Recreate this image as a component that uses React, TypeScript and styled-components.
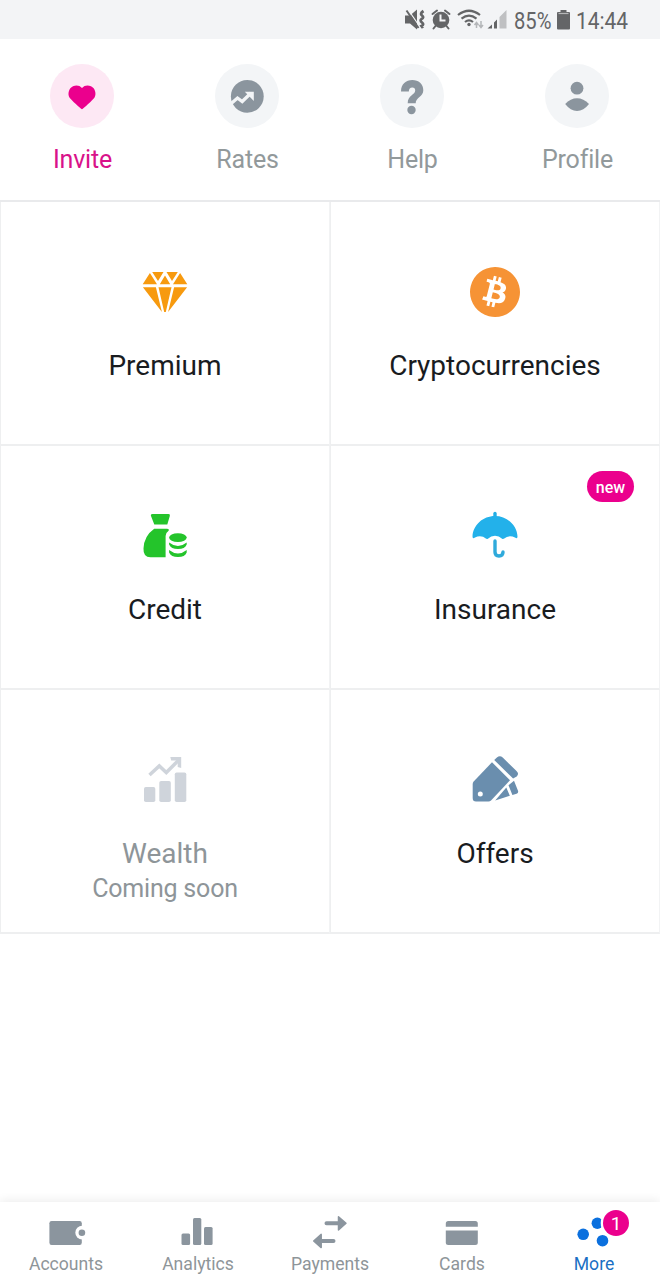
import React from 'react';
import styled, { createGlobalStyle } from 'styled-components';
import { SiBitcoin } from 'react-icons/si';

const GlobalStyle = createGlobalStyle`
  * { box-sizing: border-box; }
  body { margin: 0; background: #fff; font-family: Roboto, 'Liberation Sans', sans-serif; }
`;

const grey = '#8b959e';
const pink = '#eb008d';
const blue = '#0b70de';

const Screen = styled.main`
  display: flex;
  flex-direction: column;
  width: 660px;
  height: 1280px;
  overflow: hidden;
  background: #fff;
`;

const StatusBar = styled.div`
  display: flex;
  justify-content: flex-end;
  height: 39px;
  padding-right: 31px;
  background: #f3f4f6;
  color: #646567;
  svg { display: block; }
`;

const StatusText = styled.span<{ $width: number; $gap?: number }>`
  width: ${p => p.$width}px;
  margin-left: ${p => p.$gap ?? 0}px;
  font-size: 24px;
  line-height: 42px;
  white-space: nowrap;
`;

const Squeezed = styled.span<{ $scale: number }>`
  display: inline-block;
  transform: scaleX(${p => p.$scale});
  transform-origin: left center;
`;

const QuickActions = styled.nav`
  display: grid;
  grid-template-columns: repeat(4, 1fr);
  height: 161px;
  padding-top: 25px;
`;

const QuickAction = styled.div<{ $active?: boolean }>`
  display: flex;
  flex-direction: column;
  align-items: center;
  color: ${p => (p.$active ? '#d9128a' : '#92999b')};
  font-size: 25px;
  letter-spacing: -0.2px;
  line-height: 30px;
  gap: 17px;
`;

const QuickIcon = styled.div<{ $active?: boolean }>`
  width: 64px;
  height: 64px;
  margin-right: 1px;
  border-radius: 50%;
  background: ${p => (p.$active ? '#fde8f4' : '#f3f5f7')};
  svg { display: block; }
`;

const Grid = styled.section`
  display: grid;
  grid-template-columns: 330px 330px;
  grid-template-rows: 244px 244px 244px;
  border-top: 2px solid #e9eaec;
`;

const Tile = styled.div<{ $muted?: boolean }>`
  position: relative;
  display: flex;
  flex-direction: column;
  align-items: center;
  padding-top: 60px;
  border-left: 1px solid #eeeff0;
  border-right: 1px solid #f2f3f4;
  border-bottom: 2px solid #eeeff0;
  color: ${p => (p.$muted ? '#8e9599' : '#191c1f')};
  svg { display: block; }
`;

const TileIcon = styled.div`
  display: flex;
  align-items: center;
  justify-content: center;
  width: 60px;
  height: 60px;
`;

const TileTitle = styled.div`
  margin-top: 26px;
  font-size: 28px;
  line-height: 36px;
`;

const TileSubtitle = styled.div`
  font-size: 25px;
  letter-spacing: -0.2px;
  line-height: 34px;
`;

const NewBadge = styled.span`
  position: absolute;
  top: 25px;
  right: 25px;
  width: 47px;
  height: 31px;
  border-radius: 16px;
  background: ${pink};
  color: #fff;
  font-size: 16px;
  font-weight: 500;
  line-height: 33px;
  text-align: center;
`;

const TabBar = styled.nav`
  display: grid;
  grid-template-columns: repeat(5, 132px);
  height: 78px;
  margin-top: auto;
  background: #fff;
  box-shadow: 0 -2px 9px rgba(0, 0, 0, 0.07);
`;

const Tab = styled.div<{ $active?: boolean }>`
  display: flex;
  flex-direction: column;
  align-items: center;
  padding-top: 6px;
  color: ${p => (p.$active ? '#1a6fc4' : '#8e9599')};
  font-size: 17.6px;
  line-height: 22px;
  svg { display: block; }
`;

const TabIcon = styled.div`
  position: relative;
  width: 60px;
  height: 45px;
`;

const CountBadge = styled.span`
  position: absolute;
  top: 2px;
  left: 39px;
  width: 26px;
  height: 26px;
  border-radius: 50%;
  background: ${pink};
  color: #fff;
  font-size: 19px;
  line-height: 27px;
  text-align: center;
`;

const StatusIcons = () => (
  <svg width="108" height="39" viewBox="0 0 108 39" fill="#646567">
    <path d="M1 15.500h5l7-6v20l-7-6H1z" />
    <path d="M4 9.500l12 17.500" stroke="#f3f4f6" strokeWidth="1.300" />
    <path d="M2.500 10.500l12 17.500" stroke="#646567" strokeWidth="2" fill="none" />
    <path d="M19.500 11q-4 2.500-1.500 4.500q2.500 2-.5 3.500q-2 1.500.5 3.500q2.500 2-.5 3.500l1.500 2" fill="none" stroke="#646567" strokeWidth="2.800" />
    <circle cx="37" cy="20" r="8.300" />
    <path d="M36.500 14.500v6h5" fill="none" stroke="#f3f4f6" strokeWidth="2" />
    <path d="M28.500 14l4.500-3.500M45.500 14l-4.500-3.500M31.500 26l-2 2.500M42.500 26l2 2.500" fill="none" stroke="#646567" strokeWidth="2" strokeLinecap="round" />
    <g fill="none" stroke="#646567" strokeWidth="2.200">
      <path d="M54 15q11-8.500 22 0M57.500 18.700q7.500-6 15 0M61 22q4-3.300 8 0" />
    </g>
    <circle cx="65" cy="24.500" r="1.700" />
    <path d="M72.500 28v-5m-2 2l2-2.500 2 2.500M77 21v6m-2-2l2 2.500 2-2.500" fill="none" stroke="#b4b6b9" strokeWidth="1.500" />
    <path d="M83.500 28.500l4.500-4v4zM90 28.500v-6l3-3v9z" />
    <path d="M95.500 28.500V17l7-7v18.500z" fill="#bfc0c2" />
  </svg>
);

const BatteryIcon = () => (
  <svg width="13" height="39" viewBox="0 0 13 39" fill="#646567">
    <path d="M3.500 10h6v2.500h-6z" />
    <path d="M1 12h11a1 1 0 0 1 1 1v15.500a1 1 0 0 1-1 1H1a1 1 0 0 1-1-1V13a1 1 0 0 1 1-1z" />
    <path d="M1.500 13.500h10" stroke="#b5b6b8" strokeWidth="1.200" />
  </svg>
);

const HeartIcon = () => (
  <svg width="64" height="64" viewBox="0 0 64 64">
    <path d="M32 45.300C30.800 44.800 21 35.800 19.600 33.800C17.300 30.300 18.700 24.200 23 22.300C26.500 20.900 29.600 21.500 32 24C34.400 21.500 37.500 20.900 41 22.300C45.300 24.200 46.700 30.300 44.400 33.800C43 35.800 33.200 44.800 32 45.300Z" fill={pink} />
  </svg>
);

const RatesIcon = () => (
  <svg width="64" height="64" viewBox="0 0 64 64">
    <circle cx="32.300" cy="32.300" r="16.400" fill={grey} />
    <path d="M15 40.500l7.500-6.500 4.700 3.500 8.800-8.500" fill="none" stroke="#f3f5f7" strokeWidth="3.300" />
    <path d="M29.800 27.700h9v9.300z" fill="#f3f5f7" />
  </svg>
);

const HelpIcon = () => (
  <svg width="64" height="64" viewBox="0 0 64 64" fill={grey}>
    <path d="M21 27.500C21 20 26 16 32.300 16S43.300 20 43.300 26.300C43.300 32.700 35.700 33.500 35.700 39.300H27.700C27.700 31 35.200 30.800 35.200 26.500Q35.200 23.500 32.300 23.500Q29 23.500 28.800 27.500Z" />
    <circle cx="31.500" cy="46" r="4.200" />
  </svg>
);

const ProfileIcon = () => (
  <svg width="64" height="64" viewBox="0 0 64 64" fill={grey}>
    <circle cx="32" cy="24.200" r="6.400" />
    <path d="M20.200 40C27 32.400 37 32.400 44 40C37 49.300 27 49.300 20.200 40Z" />
  </svg>
);

const DiamondIcon = () => (
  <svg width="60" height="60" viewBox="0 0 60 60" fill="#f79a0f">
    <path d="M7.700 22.300L14.900 10.900 22 22.300zM17.200 10h11.300l-5.500 9zM24.800 22.300L30 13.600l5.200 8.700zM31.500 10h11.300L37 19zM38 22.300l7.100-11.400 7.200 11.400z" />
    <path d="M7.900 25.200h13l6 24.800zM23.500 25.200h13L30.800 50h-1.600zM39.100 25.200h13L33.100 50z" />
  </svg>
);

const CreditIcon = () => (
  <svg width="60" height="60" viewBox="0 0 60 60" fill="#24c42b">
    <path d="M17.500 8h16q2 0 1.300 2L32.300 18.600H19.300L16 10q-.7-2 1.500-2z" />
    <path d="M19.200 22.800H32q2.500 0 1.600 2Q31 26.500 30.600 30V51.200H15.500Q8 51.200 8.500 42.500Q9 30 19.200 22.800z" />
    <ellipse cx="42.900" cy="31.600" rx="8.800" ry="4.400" />
    <path d="M34.100 36.500Q43 43.500 51.700 36.500V38.500Q50 43 43 43T34.100 38.500zM34.100 44Q43 51 51.700 44V46.500Q50 51 43 51T34.100 46.500z" />
  </svg>
);

const UmbrellaIcon = () => (
  <svg width="60" height="60" viewBox="0 0 60 60" fill="none">
    <path d="M30 7.500v5" stroke="#23aee5" strokeWidth="3.400" strokeLinecap="round" />
    <path d="M7.500 30.500C8 19 18 10 30 10S52 19 52.500 30.500Q52.500 33.300 50 31.500Q44 28.500 38.800 32.700L37.500 33Q30 26.500 22.500 33L21.200 32.700Q16 28.500 10 31.500Q7.500 33.300 7.500 30.500Z" fill="#23b1ea" />
    <path d="M30 35v11q0 4 4 4t4-4" stroke="#2faadb" strokeWidth="3.400" strokeLinecap="round" />
  </svg>
);

const WealthIcon = () => (
  <svg width="60" height="60" viewBox="0 0 60 60" fill="#cfd4db">
    <rect x="9" y="37" width="11.300" height="15" rx="1.800" />
    <rect x="24.300" y="31" width="11.500" height="21" rx="1.800" />
    <rect x="39.800" y="22.500" width="11.500" height="29.500" rx="1.800" />
    <path d="M14.500 25l9.800-9 7 6.500 12.500-12.500" fill="none" stroke="#cfd4db" strokeWidth="3.500" />
    <path d="M35.300 7h10.900v11l-3.500-1v-6.500h-6.500z" />
  </svg>
);

const OffersIcon = () => (
  <svg width="60" height="60" viewBox="0 0 60 60" fill="#6a8eae">
    <path d="M27 12.200L45 30.300 26 50.500Q25 51.500 23.500 51.500H11Q7.700 51.500 7.700 48V34q0-1.500 1.200-2.800z" />
    <path d="M29.200 10l2.700-2.400q3-2.600 5.800 0L51.500 21q3 2.700.2 5.500l-3.600 2z" />
    <path d="M41.300 37.500l3.500 8.300L30.200 50.500zM43.500 35.300l5.500-4.500 4 10q.7 2.200-1.400 3l-4.200 1.300z" />
    <circle cx="15.300" cy="44" r="2.500" fill="#fff" />
  </svg>
);

const WalletIcon = () => (
  <svg width="60" height="45" viewBox="0 0 60 45" fill={grey}>
    <rect x="13.400" y="13" width="32.400" height="24" rx="2.200" />
    <circle cx="46.200" cy="24.700" r="6.900" fill="#fff" />
    <circle cx="45.900" cy="24.700" r="3.300" />
  </svg>
);

const AnalyticsIcon = () => (
  <svg width="60" height="45" viewBox="0 0 60 45" fill={grey}>
    <rect x="13.500" y="25.500" width="8.600" height="11.500" rx="1.500" />
    <rect x="25" y="10" width="8.300" height="27" rx="1.500" />
    <rect x="36" y="19" width="8.600" height="18" rx="1.500" />
  </svg>
);

const PaymentsIcon = () => (
  <svg width="60" height="45" viewBox="0 0 60 45" fill={grey} stroke={grey} strokeLinejoin="round">
    <path d="M26.500 15.300h13M33.500 33H21" strokeWidth="4" strokeLinecap="round" />
    <path d="M38.500 8.700v13.200l7.500-6.600zM21.200 26.400v13.200L13.700 33z" strokeWidth="1.500" />
  </svg>
);

const CardIcon = () => (
  <svg width="60" height="45" viewBox="0 0 60 45" fill={grey}>
    <path d="M16.300 13h27q2.500 0 2.500 2.500v3.300h-32v-3.300q0-2.500 2.500-2.500z" />
    <path d="M13.800 22.500h32v12q0 2.500-2.500 2.500h-27q-2.500 0-2.500-2.500z" />
  </svg>
);

const MoreIcon = () => (
  <svg width="60" height="45" viewBox="0 0 60 45" fill={blue}>
    <circle cx="19.200" cy="26.300" r="5.800" />
    <circle cx="33.300" cy="15.300" r="5.700" />
    <circle cx="38.500" cy="32.700" r="5.800" />
    <circle cx="52" cy="15" r="15.300" fill="#fff" />
  </svg>
);

const quickActions = [
  { label: 'Invite', icon: <HeartIcon />, active: true },
  { label: 'Rates', icon: <RatesIcon /> },
  { label: 'Help', icon: <HelpIcon /> },
  { label: 'Profile', icon: <ProfileIcon /> },
];

const tiles = [
  { title: 'Premium', icon: <DiamondIcon /> },
  { title: 'Cryptocurrencies', icon: <SiBitcoin size={50} color="#f69335" /> },
  { title: 'Credit', icon: <CreditIcon /> },
  { title: 'Insurance', icon: <UmbrellaIcon />, badge: 'new' },
  { title: 'Wealth', icon: <WealthIcon />, subtitle: 'Coming soon' },
  { title: 'Offers', icon: <OffersIcon /> },
];

const tabs = [
  { label: 'Accounts', icon: <WalletIcon /> },
  { label: 'Analytics', icon: <AnalyticsIcon /> },
  { label: 'Payments', icon: <PaymentsIcon /> },
  { label: 'Cards', icon: <CardIcon /> },
  { label: 'More', icon: <MoreIcon />, count: 1 },
];

export default function App() {
  return (
    <Screen>
      <GlobalStyle />
      <StatusBar>
        <StatusIcons />
        <StatusText $width={43} $gap={2}><Squeezed $scale={0.84}>85%</Squeezed></StatusText>
        <BatteryIcon />
        <StatusText $width={53} $gap={6}><Squeezed $scale={0.87}>14:44</Squeezed></StatusText>
      </StatusBar>
      <QuickActions>
        {quickActions.map(a => (
          <QuickAction key={a.label} $active={a.active}>
            <QuickIcon $active={a.active}>{a.icon}</QuickIcon>
            {a.label}
          </QuickAction>
        ))}
      </QuickActions>
      <Grid>
        {tiles.map(t => (
          <Tile key={t.title} $muted={!!t.subtitle}>
            <TileIcon>{t.icon}</TileIcon>
            <TileTitle>{t.title}</TileTitle>
            {t.subtitle && <TileSubtitle>{t.subtitle}</TileSubtitle>}
            {t.badge && <NewBadge>{t.badge}</NewBadge>}
          </Tile>
        ))}
      </Grid>
      <TabBar>
        {tabs.map(t => (
          <Tab key={t.label} $active={!!t.count}>
            <TabIcon>
              {t.icon}
              {t.count && <CountBadge>{t.count}</CountBadge>}
            </TabIcon>
            {t.label}
          </Tab>
        ))}
      </TabBar>
    </Screen>
  );
}
